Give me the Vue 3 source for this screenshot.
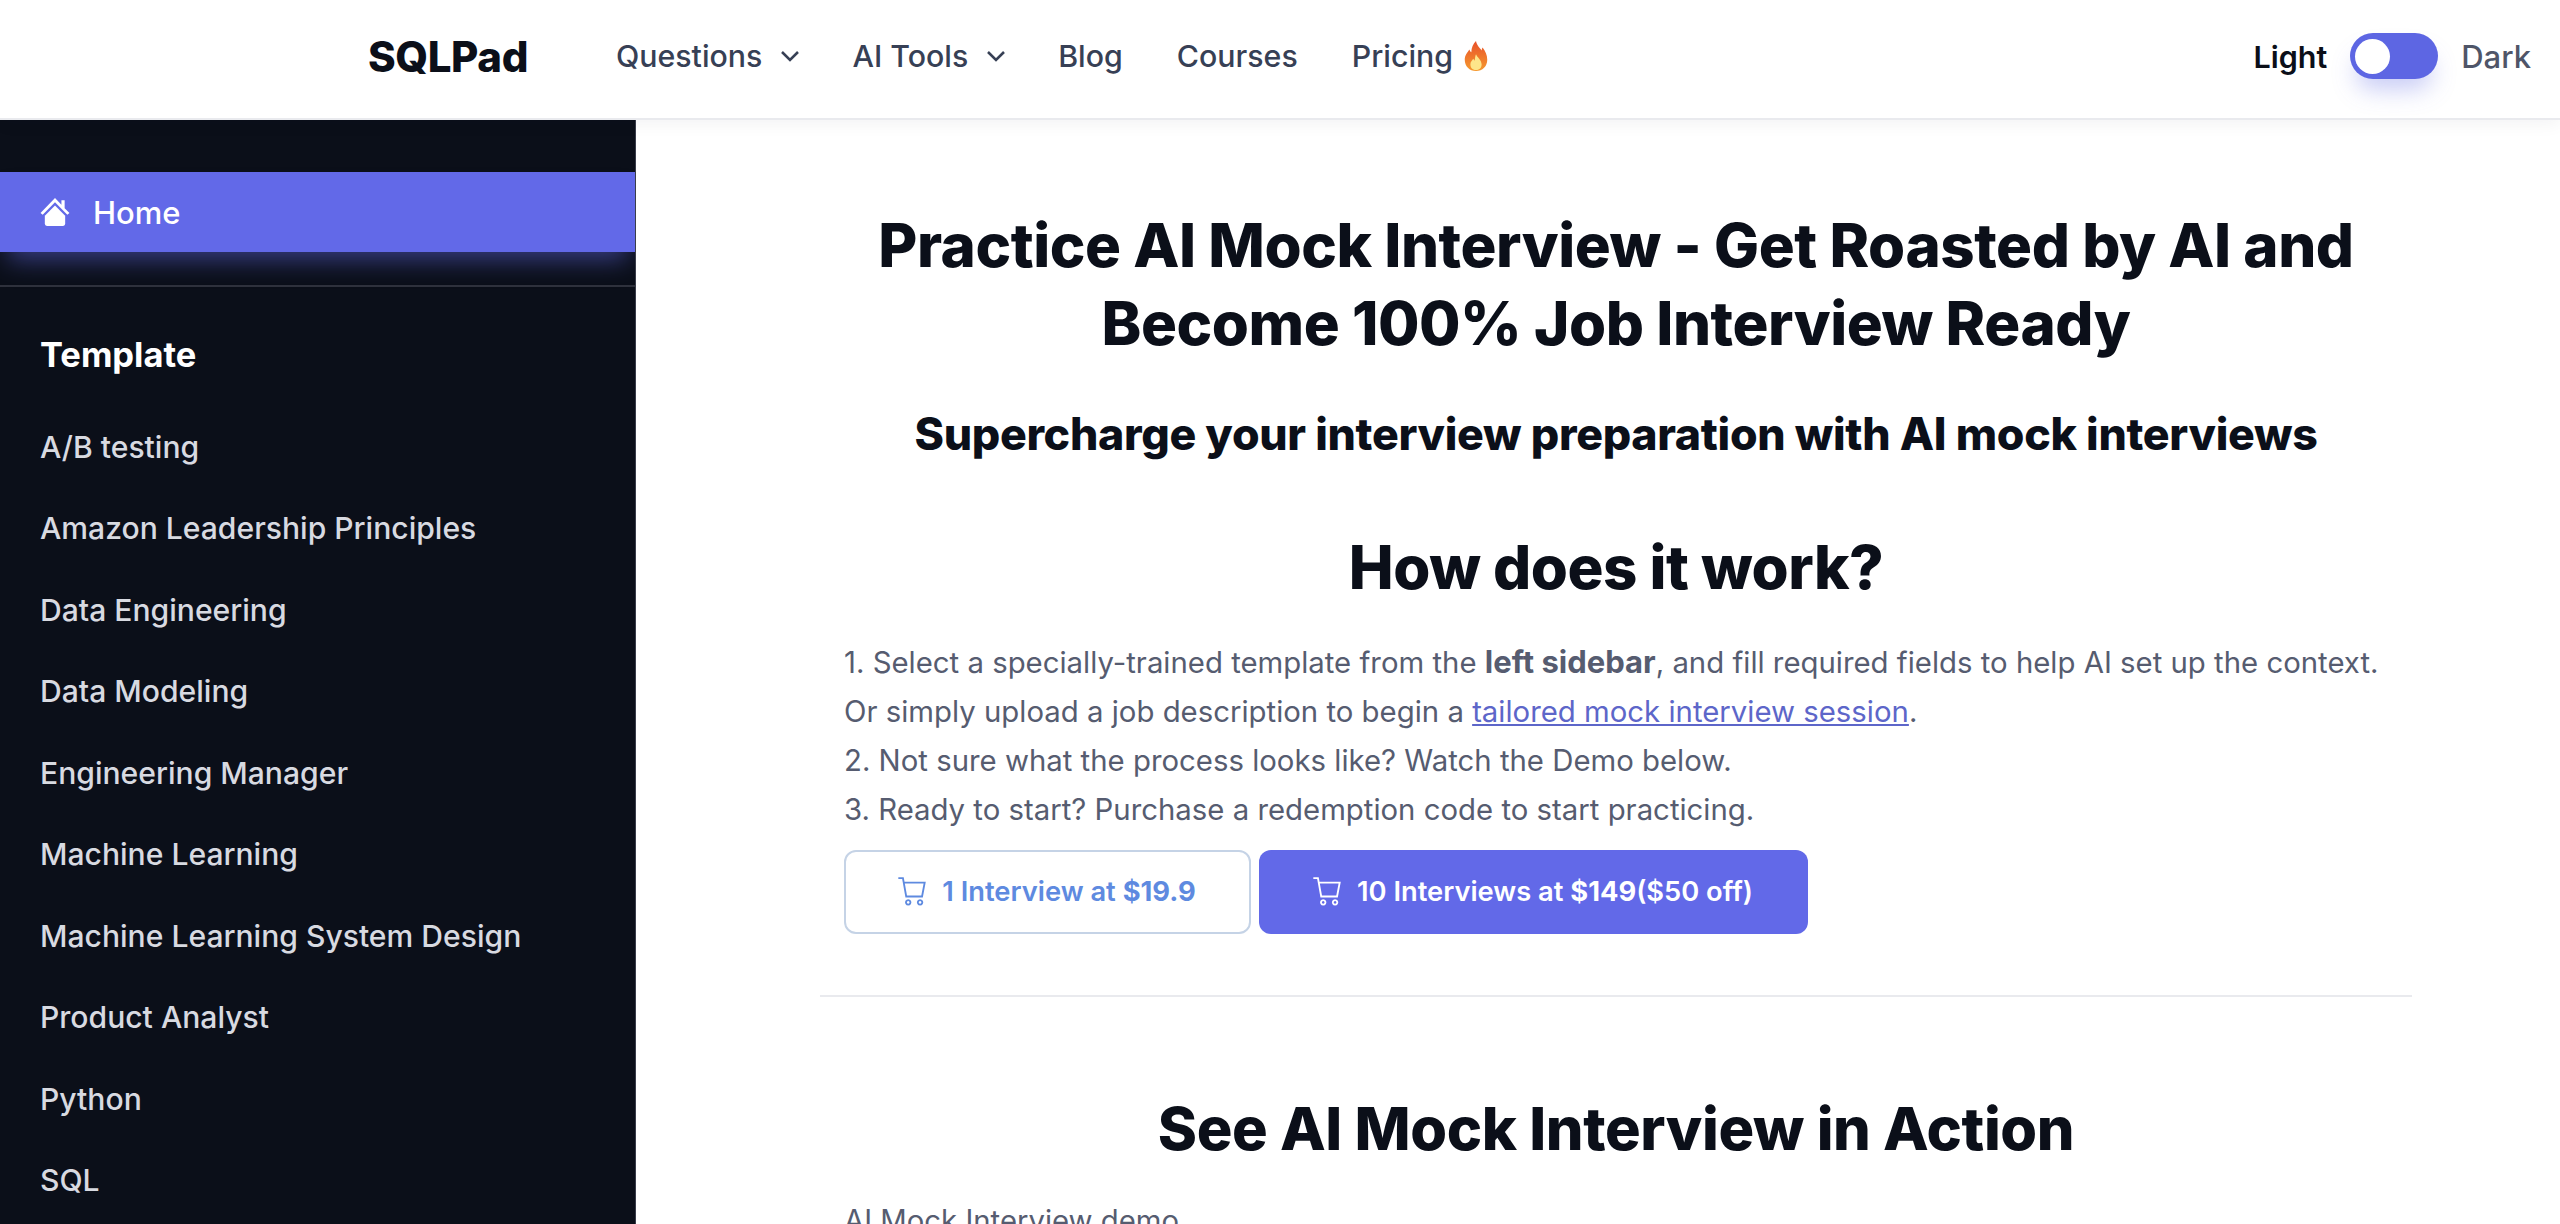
<script setup>
const items = ['A/B testing','Amazon Leadership Principles','Data Engineering','Data Modeling','Engineering Manager','Machine Learning','Machine Learning System Design','Product Analyst','Python','SQL','Statistics']
</script>

<template>
  <div class="page">
    <header class="top">
      <div class="logo">SQLPad</div>
      <nav class="nav">
        <a class="nl">Questions <svg class="chev" viewBox="0 0 20 20"><path d="M5 7.500l5 5 5-5" /></svg></a>
        <a class="nl">AI Tools <svg class="chev" viewBox="0 0 20 20"><path d="M5 7.500l5 5 5-5" /></svg></a>
        <a class="nl">Blog</a>
        <a class="nl">Courses</a>
        <a class="nl pricing">Pricing
          <svg class="fire" viewBox="0 0 24 32">
            <defs><linearGradient id="fg" x1="0" y1="0" x2="0" y2="1"><stop offset="0" stop-color="#e8502a"/><stop offset="1" stop-color="#f59a2e"/></linearGradient></defs>
            <path fill="url(#fg)" d="M12 0c1 5 4 7 6 10 0-1 .5-2 1-3 3 4 5 8 5 13 0 7-5 12-12 12S0 27 0 20c0-5 3-8 5-11 .5 1.500 1 2.500 2 3C7 7 9 3 12 0z"/>
            <path fill="#fde68a" d="M12 14c1 3 6 6 6 11 0 4-3 6-6 6s-6-2-6-6c0-3 2-4 3-6 .5 1 1 1.500 1.500 2C11 19 11 16 12 14z"/>
          </svg>
        </a>
      </nav>
      <div class="theme">
        <span class="light">Light</span>
        <span class="switch"><span class="knob"></span></span>
        <span class="dark">Dark</span>
      </div>
    </header>
    <div class="body">
      <aside class="side">
        <div class="home">
          <svg class="house" viewBox="0 0 28 28"><path d="M14 1L.5 15l2 1.500L14 5l11.500 11.500 2-1.500-4.500-4.600V3h-3v4.300z"/><path d="M14 8L4.500 17.500V25a2 2 0 0 0 2 2h15a2 2 0 0 0 2-2v-7.500z"/></svg>
          <span>Home</span>
        </div>
        <div class="rule"></div>
        <div class="gtitle">Template</div>
        <ul class="list">
          <li v-for="i in items" :key="i">{{ i }}</li>
        </ul>
      </aside>
      <main class="main">
        <div class="wrap">
          <h1 class="h1">Practice AI Mock Interview - Get Roasted by AI and Become 100% Job Interview Ready</h1>
          <h2 class="sub">Supercharge your interview preparation with AI mock interviews</h2>
          <h2 class="how">How does it work?</h2>
          <div class="steps">
            <p>1. Select a specially-trained template from the <b>left sidebar</b>, and fill required fields to help AI set up the context.</p>
            <p>Or simply upload a job description to begin a <a class="link">tailored mock interview session</a>.</p>
            <p>2. Not sure what the process looks like? Watch the Demo below.</p>
            <p>3. Ready to start? Purchase a redemption code to start practicing.</p>
          </div>
          <div class="btns">
            <button class="btn one">
              <svg class="cart" viewBox="1 2 22 22"><path d="M2 2.800h3.500l2.500 14h12l2-10.500H6M9.500 19.500a1.700 1.700 0 1 0 .01 0M18.500 19.500a1.700 1.700 0 1 0 .01 0"/></svg>
              <span>1 Interview at <b>$19.9</b></span>
            </button>
            <button class="btn ten">
              <svg class="cart" viewBox="1 2 22 22"><path d="M2 2.800h3.500l2.500 14h12l2-10.500H6M9.500 19.500a1.700 1.700 0 1 0 .01 0M18.500 19.500a1.700 1.700 0 1 0 .01 0"/></svg>
              <span>10 Interviews at <b>$149</b>($50 off)</span>
            </button>
          </div>
          <div class="divider"></div>
          <h2 class="see">See AI Mock Interview in Action</h2>
          <p class="demo">AI Mock Interview demo</p>
        </div>
      </main>
    </div>
  </div>
</template>

<style>
html, body { margin: 0; height: 100%; overflow: hidden; background: #fff; }
</style>

<style scoped>
.page { width: 2560px; height: 1224px; overflow: hidden; font-family: Inter, "Liberation Sans", sans-serif; display: flex; flex-direction: column; position: relative; }
.top { height: 112px; padding-bottom: 6px; flex: none; display: flex; align-items: center; background: #fff; border-bottom: 2px solid #e9eaee; padding-left: 368px; padding-right: 29px; box-sizing: content-box; position: relative; z-index: 2; box-shadow: 0 4px 16px rgba(20,24,40,.05); }
.logo { font-size: 42px; font-weight: 800; color: #0b0f19; width: 248px; letter-spacing: -.4px; }
.nav { display: flex; gap: 54px; align-items: center; }
.nl { display: inline-flex; align-items: center; font-size: 30.300px; font-weight: 500; color: #374055; gap: 12px; }
.nl.pricing { gap: 10px; }
.chev { width: 32px; height: 32px; margin-right: -8px; fill: none; stroke: #374055; stroke-width: 1.600; }
.fire { width: 26px; height: 30px; }
.theme { margin-left: auto; display: flex; align-items: center; gap: 23px; font-size: 31px; font-weight: 500; }
.light { color: #0b0f19; font-weight: 600; font-size: 30.500px; }
.dark { color: #4f5568; }
.switch { width: 88px; height: 46px; border-radius: 23px; background: #5d66e3; box-shadow: 0 16px 24px -6px rgba(93,102,227,.35); display: flex; align-items: center; padding-left: 5px; box-sizing: border-box; }
.knob { width: 35px; height: 35px; border-radius: 50%; background: #fff; }
.body { flex: 1; display: flex; min-height: 0; }
.side { width: 636px; flex: none; background: #0b0f19; border-right: 1px solid #3a3d4a; box-sizing: border-box; color: #fff; padding-top: 52px; overflow: hidden; }
.home { height: 80px; background: #6269e8; display: flex; align-items: center; padding-left: 40px; gap: 23px; font-size: 31px; font-weight: 500; box-shadow: 0 16px 24px -8px rgba(98,105,232,.5); }
.house { width: 30px; height: 30px; fill: #fff; }
.rule { height: 1.500px; background: #2e313c; margin-top: 33px; }
.gtitle { font-size: 34.500px; font-weight: 700; padding-left: 40px; margin-top: 48px; line-height: 40px; }
.list { list-style: none; margin: 32px 0 0; padding: 0 0 0 40px; }
.list li { height: 81.500px; line-height: 81.500px; font-size: 30.100px; font-weight: 500; color: #d8dae1; white-space: nowrap; }
.main { flex: 1; min-width: 0; padding: 0 148px 0 184px; background: #fff; }
.wrap { padding-top: 86px; }
.h1 { margin: 0; text-align: center; font-size: 60px; line-height: 78px; font-weight: 800; color: #0b0f19; padding: 0 24px; letter-spacing: -.45px; }
.sub { margin: 42px 0 0; text-align: center; font-size: 44.700px; line-height: 60px; font-weight: 800; color: #0b0f19; letter-spacing: -.32px; }
.how { margin: 64px 0 0; text-align: center; font-size: 60px; line-height: 78px; font-weight: 800; color: #0b0f19; letter-spacing: -.5px; }
.steps { margin: 31px 24px 0; font-size: 29.350px; line-height: 49px; color: #565c70; }
.steps p { margin: 0; white-space: nowrap; }
.steps b { font-weight: 700; font-size: 31px; }
.link { color: #5d66c9; text-decoration: underline; }
.btns { display: flex; gap: 8px; margin: 15.500px 24px 0; }
.btn { height: 84px; border-radius: 12px; font: 600 27.300px Inter, "Liberation Sans", sans-serif; display: flex; align-items: center; justify-content: center; gap: 16px; box-sizing: border-box; }
.btn span { padding-right: 2px; }
.btn b { font-weight: 700; }
.one { width: 407px; background: #fff; border: 2px solid #c5d3e6; color: #5e8ae0; }
.ten { width: 549px; background: #6269e8; border: none; color: #fff; }
.cart { width: 29px; height: 29px; fill: none; stroke: currentColor; stroke-width: 1.400; }
.divider { height: 2px; background: #e9eaee; margin-top: 61px; }
.see { margin: 92px 0 0; text-align: center; font-size: 59.500px; line-height: 78px; font-weight: 800; color: #0b0f19; letter-spacing: -.4px; }
.demo { margin: 29px 24px 0; font-size: 29.300px; line-height: 49px; color: #565c70; }
</style>
